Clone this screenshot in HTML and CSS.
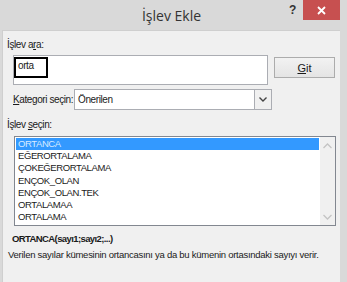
FILE: index.html
```html
<!DOCTYPE html>
<html lang="tr">
<head>
    <meta charset="UTF-8">
    <title>İşlev Ekle</title>
    <link rel="stylesheet" href="styles.css">
</head>
<body>
    <div class="window">
        <div class="titlebar">
            <span class="title">İşlev Ekle</span>
            <span class="help">?</span>
            <span class="close">
                <svg width="9" height="9" viewBox="0 0 9 9"><path d="M1 1L8 8M8 1L1 8" stroke="#fff" stroke-width="1.8"/></svg>
            </span>
        </div>

        <div class="content">
            <div class="label">İşlev a<u>r</u>a:</div>
            <div class="search-row">
                <div class="search-box"><span class="typed">orta</span></div>
                <button class="btn"><u>G</u>it</button>
            </div>

            <div class="category-row">
                <span class="cat-label"><u>K</u>ategori seçin:</span>
                <div class="select">
                    <span class="select-value">Önerilen</span>
                    <span class="select-arrow">
                        <svg width="8" height="5" viewBox="0 0 8 5"><path d="M0.5 0.5L4 4L7.5 0.5" fill="none" stroke="#444" stroke-width="1.4"/></svg>
                    </span>
                </div>
            </div>

            <div class="label list-label">İşlev <u>s</u>eçin:</div>
            <div class="listbox">
                <ul class="items">
                    <li class="selected">ORTANCA</li>
                    <li>EĞERORTALAMA</li>
                    <li>ÇOKEĞERORTALAMA</li>
                    <li>ENÇOK_OLAN</li>
                    <li>ENÇOK_OLAN.TEK</li>
                    <li>ORTALAMAA</li>
                    <li>ORTALAMA</li>
                </ul>
                <div class="scrollbar">
                    <svg width="9" height="6" viewBox="0 0 9 6"><path d="M0.5 5L4.5 1L8.5 5" fill="none" stroke="#c4c4c4" stroke-width="1.3"/></svg>
                    <svg width="9" height="6" viewBox="0 0 9 6"><path d="M0.5 1L4.5 5L8.5 1" fill="none" stroke="#c4c4c4" stroke-width="1.3"/></svg>
                </div>
            </div>

            <div class="syntax">ORTANCA(sayı1;sayı2;...)</div>
            <div class="desc">Verilen sayılar kümesinin ortancasını ya da bu kümenin ortasındaki sayıyı verir.</div>
        </div>
    </div>
</body>
</html>
```

FILE: styles.css
```css
body {
    margin: 0;
    font-family: "Liberation Sans", Arial, sans-serif;
    font-size: 10px;
    letter-spacing: -0.4px;
    color: #1a1a1a;
    background-color: #d9d9d9;
}

.window {
    width: 347px;
    height: 282px;
    display: flex;
    flex-direction: column;
    background-color: #d9d9d9;
    overflow: hidden;
}

.titlebar {
    height: 30px;
    flex-shrink: 0;
    position: relative;
    display: flex;
    justify-content: center;
    align-items: center;
    letter-spacing: 0;
}

.title {
    font-family: "Open Sans", "Liberation Sans", sans-serif;
    font-size: 14px;
    color: #333;
    margin-left: -4px;
}

.help {
    position: absolute;
    left: 289px;
    top: 3px;
    font-weight: bold;
    font-size: 12px;
    color: #333;
}

.close {
    position: absolute;
    left: 303px;
    top: 0;
    width: 37px;
    height: 20px;
    background-color: #c75050;
    display: flex;
    justify-content: center;
    align-items: center;
}

.content {
    flex: 1;
    margin: 0 7px 0 2px;
    padding: 6px 0 0 4px;
    background-color: #f0f0f0;
    border-top: 1px solid #cfcfcf;
    border-left: 1px solid #cfcfcf;
}

.label {
    height: 15px;
    line-height: 15px;
    white-space: nowrap;
}

.search-row {
    display: flex;
    align-items: flex-start;
    margin: 3px 0 0 6px;
}

.search-box {
    width: 253px;
    height: 28px;
    background: #fff;
    border: 1px solid #abadb3;
    position: relative;
}

.typed {
    position: absolute;
    left: 0;
    top: 1px;
    width: 28px;
    height: 17px;
    border: 2px solid #000;
    padding-left: 2px;
    line-height: 13px;
}

.btn {
    width: 61px;
    height: 21px;
    margin: 2px 0 0 6px;
    font-family: inherit;
    font-size: 11px;
    color: #1a1a1a;
    background: linear-gradient(#f2f2f2, #e4e4e4);
    border: 1px solid #acacac;
    padding: 0;
}

.category-row {
    display: flex;
    align-items: center;
    margin: 4px 0 0 6px;
}

.cat-label {
    width: 60px;
    white-space: nowrap;
}

.select {
    width: 196px;
    height: 19px;
    background: #fff;
    border: 1px solid #abadb3;
    display: flex;
    align-items: center;
    margin-left: 1px;
}

.select-value {
    flex: 1;
    padding-left: 3px;
}

.select-arrow {
    width: 16px;
    height: 19px;
    border-left: 1px solid #abadb3;
    background: #f0f0f0;
    display: flex;
    justify-content: center;
    align-items: center;
}

.list-label {
    margin-top: 7px;
}

.listbox {
    margin: 4px 0 0 7px;
    width: 320px;
    height: 88px;
    border: 1px solid #828790;
    background: #fff;
    display: flex;
}

.items {
    list-style: none;
    margin: 0;
    padding: 1px 0 0 1px;
    flex: 1;
    letter-spacing: -0.4px;
}

.items li {
    height: 12.2px;
    line-height: 12px;
    padding-left: 2px;
    font-size: 9.5px;
}

.items li.selected {
    background-color: #3399ff;
    color: #d8ebff;
    margin-right: 1px;
}

.scrollbar {
    width: 15px;
    background: #f0f0f0;
    display: flex;
    flex-direction: column;
    justify-content: space-between;
    align-items: center;
    padding: 6px 0 5px;
}

.syntax {
    font-weight: bold;
    font-size: 9.5px;
    letter-spacing: -0.6px;
    margin: 5px 0 0 5px;
    height: 15px;
    line-height: 15px;
}

.desc {
    margin: 3px 0 0 1px;
    white-space: nowrap;
    font-size: 9.5px;
    letter-spacing: -0.27px;
}
```
